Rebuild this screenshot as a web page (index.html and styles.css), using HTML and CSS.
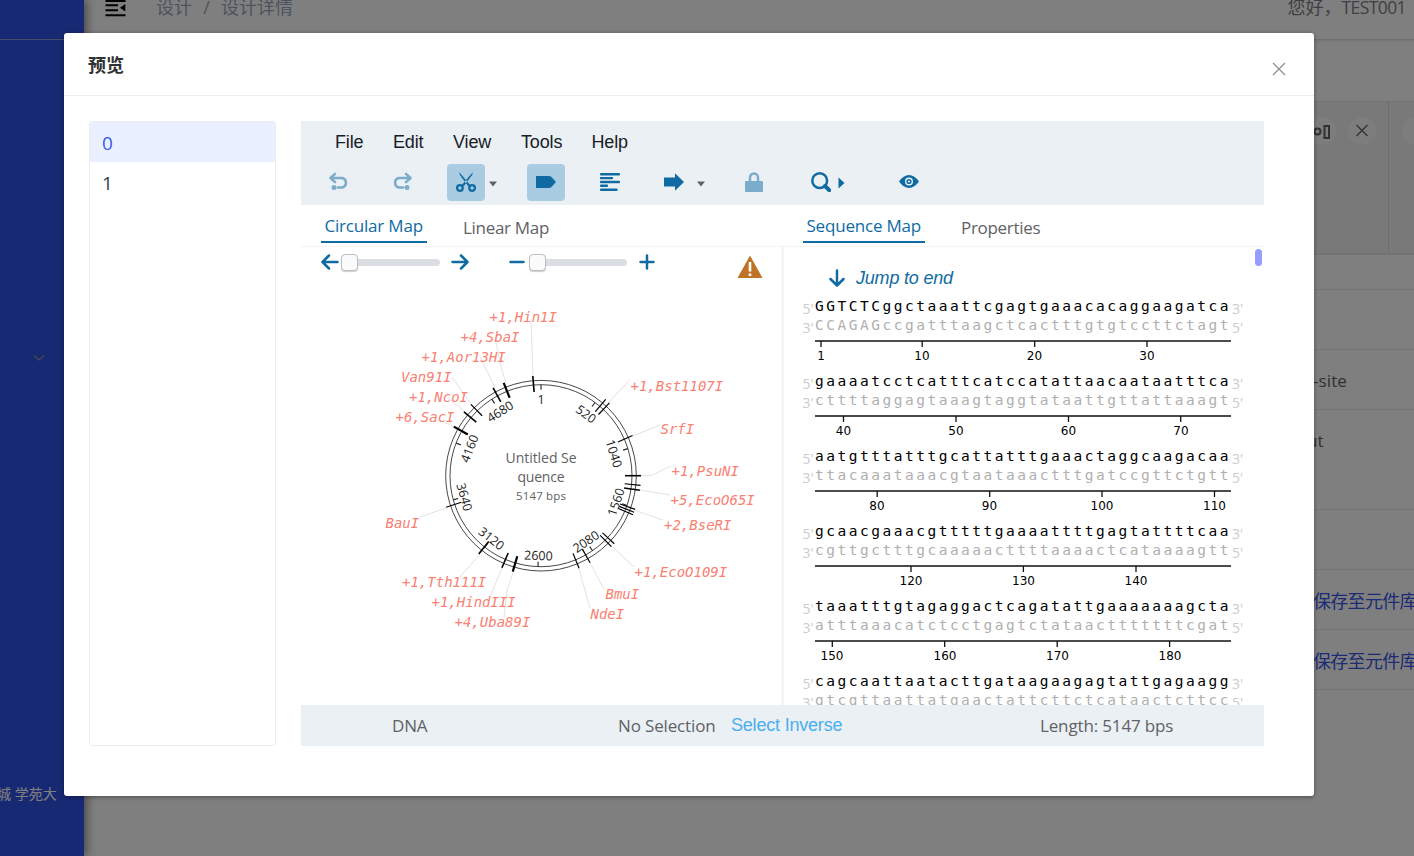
FILE: index.html
```html
<!DOCTYPE html>
<html lang="zh">
<head>
<meta charset="utf-8">
<title>预览</title>
<link rel="stylesheet" href="styles.css">
</head>
<body>
<div class="app">
  <aside class="sidebar">
    <div class="brand"></div>
    <div class="nav"><svg class="chev" width="12" height="8" viewBox="0 0 12 8"><path d="M1 1.5L6 6L11 1.5"/></svg></div>
    <div class="address">城 学苑大</div>
  </aside>
  <div class="main">
    <header class="topbar">
      <svg class="burger" width="22" height="18" viewBox="0 0 22 18"><path d="M1.500 2H21.500M1.500 6.300H14M1.500 11.300H14M1.500 16.300H21.500" /><path class="solid" d="M21.300 5V12.500L16 8.800Z"/></svg>
      <nav class="crumbs"><span>设计</span><i>/</i><span>设计详情</span></nav>
      <div class="user"><span>您好，</span><span class="uname">TEST001</span></div>
    </header>
    <section class="detail">
      <div class="strip">
        <div class="card">
          <span class="dot"><svg width="20" height="20" viewBox="0 0 20 20"><circle cx="5.500" cy="10.500" r="3"/><path d="M12.500 5H17V17H12.500Z M0 10.500H2"/></svg></span>
          <span class="dot"><svg width="14" height="14" viewBox="0 0 14 14"><path class="thin" d="M1.500 1L12.500 12M12.500 1L1.500 12"/></svg></span>
        </div>
        <div class="card next"><span class="dot"></span></div>
      </div>
      <div class="row head"></div>
      <div class="row"></div>
      <div class="row"><span class="site">-site</span></div>
      <div class="row tall"><span class="ut">ut</span></div>
      <div class="row"></div>
      <div class="row"><a>保存至元件库</a></div>
      <div class="row"><a>保存至元件库</a></div>
    </section>
  </div>
</div>

<div class="mask">
  <div class="modal">
    <div class="modal-head">
      <h1>预览</h1>
      <svg class="close" width="14" height="14" viewBox="0 0 14 14"><path d="M1 1L13 13M13 1L1 13"/></svg>
    </div>
    <div class="modal-body">
      <ul class="list"><li class="on">0</li><li>1</li></ul>
      <div class="editor">
        <div class="tools">
          <div class="menu"><span>File</span><span>Edit</span><span>View</span><span>Tools</span><span>Help</span></div>
          <div class="buttons">
            <div class="tool off"><button><svg class="line" width="22" height="20" viewBox="0 0 22 20"><path d="M7 1.800L2.500 6L7 10.200M3 6H14.500A5 5 0 0 1 14.500 15.500H10"/><circle class="fill" cx="6" cy="15.500" r="2.500"/></svg></button></div>
            <div class="tool off"><button><svg class="line" width="22" height="20" viewBox="0 0 22 20"><path d="M15 1.800L19.500 6L15 10.200M19 6H7.500A5 5 0 0 0 7.500 15.500H12"/><circle class="fill" cx="16" cy="15.500" r="2.500"/></svg></button></div>
            <div class="tool"><button class="on"><svg class="scissor" width="20" height="20" viewBox="0 0 20 20"><path class="fill" d="M3.300 .2L14.200 13L12.200 14.200L3.700 2.800ZM16.700 .2L5.800 13L7.800 14.200L16.300 2.800Z"/><circle cx="3.900" cy="16" r="2.800"/><circle cx="16.100" cy="16" r="2.800"/></svg></button><svg class="caret" width="10" height="6" viewBox="0 0 10 6"><path d="M1 .5H9L5 5.500Z"/></svg></div>
            <div class="tool"><button class="on"><svg width="20" height="12" viewBox="0 0 20 12"><path class="fill" d="M0 0H13Q14.500 0 15.500 1L20 6L15.500 11Q14.500 12 13 12H0Z"/></svg></button></div>
            <div class="tool"><button><svg class="bars" width="20" height="18" viewBox="0 0 20 18"><path d="M1 1.300H19M1 5.100H12M1 9H19M1 12.800H7M1 16.700H16.500"/></svg></button></div>
            <div class="tool"><button><svg width="20" height="18" viewBox="0 0 20 18"><path class="fill" d="M0 4.500H11V.3L20 9L11 17.700V13.500H0Z"/></svg></button><svg class="caret" width="10" height="6" viewBox="0 0 10 6"><path d="M1 .5H9L5 5.500Z"/></svg></div>
            <div class="tool off"><button><svg class="lock" width="18" height="20" viewBox="0 0 18 20"><path d="M5 9V5.500A4 4 0 0 1 13 5.500V9"/><rect class="fill" y="9" width="18" height="11" rx="1"/></svg></button></div>
            <div class="tool find"><button><svg class="mag" width="20" height="20" viewBox="0 0 20 20"><circle cx="8.700" cy="8.700" r="7.400"/><path d="M14 14L18.200 18.200"/></svg></button><svg class="next-arrow" width="7" height="12" viewBox="0 0 7 12"><path class="fill" d="M.5 .5L6.500 6L.5 11.500Z"/></svg></div>
            <div class="tool"><button><svg width="20" height="13" viewBox="0 0 20 13"><path class="fill" fill-rule="evenodd" d="M0 6.500Q4.500 0 10 0T20 6.500Q15.500 13 10 13T0 6.500ZM10 2.500A4 4 0 1 0 10 10.500A4 4 0 1 0 10 2.500Z"/><circle class="fill" cx="10" cy="6.500" r="2.600"/><circle cx="10" cy="6.500" r="1" fill="#fff"/></svg></button></div>
          </div>
        </div>
        <div class="tabs">
          <div class="pair"><span class="tab on t1">Circular Map</span><span class="tab t2">Linear Map</span></div>
          <div class="pair second"><span class="tab on t3">Sequence Map</span><span class="tab t4">Properties</span></div>
        </div>
        <div class="panes">
          <div class="pane">
            <div class="controls">
              <svg class="line" width="18" height="16" viewBox="0 0 18 16"><path d="M8 1.500L1.500 8L8 14.500M2 8H16.500"/></svg>
              <div class="slider"><b></b></div>
              <svg class="line right" width="18" height="16" viewBox="0 0 18 16"><path d="M10 1.500L16.500 8L10 14.500M16 8H1.500"/></svg>
              <svg class="line minus" width="16" height="16" viewBox="0 0 16 16"><path d="M1.500 8H14.500"/></svg>
              <div class="slider two"><b></b></div>
              <svg class="line" width="16" height="16" viewBox="0 0 16 16"><path d="M1.500 8H14.500M8 1.500V14.500"/></svg>
              <svg class="warn" width="26" height="24" viewBox="0 0 26 24"><path d="M13 .5L25.500 23H.5Z" fill="#bf7326"/><path d="M11.700 7H14.300V16.500H11.700ZM11.700 18.500H14.300V21H11.700Z" fill="#fff"/></svg>
            </div>
            <svg class="plasmid" width="480" height="417" viewBox="301 288 480 417">
              <path class="leader" d="M533 376L531 320M506 383L501 367L495 337M495 388L490 377L480 357M473 407L452 377M465 412L448 398M454 427L440 420M608 403L629 381M633 436L660 425M641 475.700H651L671 466M640 490L670 495M634 510L663 520M613 547L634 567M590 563L604 589M579 569L590 608M513 573L507 590L504 617M502 568L490 597M480 554L460 577M446 508L420 517"/>
              <g transform="translate(541 475.700)">
                <circle class="ring" r="95.300"/><circle class="ring" r="91"/>
                <g class="tick">
                  <path d="M0-91V-86"/><path transform="rotate(36.4)" d="M0-91V-86"/><path transform="rotate(72.7)" d="M0-91V-86"/><path transform="rotate(109.1)" d="M0-91V-86"/><path transform="rotate(145.5)" d="M0-91V-86"/><path transform="rotate(181.9)" d="M0-91V-86"/><path transform="rotate(218.2)" d="M0-91V-86"/><path transform="rotate(254.6)" d="M0-91V-86"/><path transform="rotate(291)" d="M0-91V-86"/><path transform="rotate(327.3)" d="M0-91V-86"/>
                </g>
                <g class="cut">
                  <path class="b" transform="rotate(-4.7)" d="M0-100V-84"/><path class="bb" transform="rotate(-21.9)" d="M0-100V-84"/><path class="b" transform="rotate(-28.6)" d="M0-100V-84"/><path transform="rotate(-44.5)" d="M0-100V-84"/><path class="b" transform="rotate(-50.4)" d="M0-100V-84"/><path class="bb" transform="rotate(-60.6)" d="M0-100V-84"/><path transform="rotate(-108.4)" d="M0-100V-84"/><path class="b" transform="rotate(218.5)" d="M0-100V-84"/><path class="b" transform="rotate(203)" d="M0-100V-84"/><path class="bb" transform="rotate(196.4)" d="M0-100V-84"/><path transform="rotate(40.3)" d="M0-100V-84"/><path transform="rotate(43.2)" d="M0-100V-84"/><path transform="rotate(66.3)" d="M0-100V-84"/><path class="b" transform="rotate(90)" d="M0-100V-84"/><path transform="rotate(95.500)" d="M0-100V-84"/><path class="b" transform="rotate(98.4)" d="M0-100V-84"/><path transform="rotate(109.7)" d="M0-100V-84"/><path transform="rotate(111.4)" d="M0-100V-84"/><path transform="rotate(113)" d="M0-100V-84"/><path transform="rotate(132.9)" d="M0-100V-84"/><path transform="rotate(135.2)" d="M0-100V-84"/><path transform="rotate(150.6)" d="M0-100V-84"/><path transform="rotate(157.6)" d="M0-100V-84"/>
                </g>
              </g>
              <g class="pos">
                <text x="541" y="404">1</text>
                <text transform="translate(586 414) rotate(36.4)" y="4.500">520</text>
                <text transform="translate(614 453.500) rotate(72.7)" y="4.500">1040</text>
                <text transform="translate(616 502) rotate(-70.9)" y="4.500">1560</text>
                <text transform="translate(586 541.500) rotate(-34.500)" y="4.500">2080</text>
                <text transform="translate(538.500 555.500) rotate(1.900)" y="4.500">2600</text>
                <text transform="translate(491.500 538.500) rotate(38.200)" y="4.500">3120</text>
                <text transform="translate(464.500 497) rotate(74.600)" y="4.500">3640</text>
                <text transform="translate(469.500 448.500) rotate(-69)" y="4.500">4160</text>
                <text transform="translate(500 411.500) rotate(-32.700)" y="4.500">4680</text>
              </g>
              <g class="enzyme">
                <text x="489.500" y="321.700">+1,Hin1I</text><text x="460.500" y="341.700">+4,SbaI</text><text x="421.500" y="361.700">+1,Aor13HI</text><text x="401" y="381.700">Van91I</text><text x="409" y="401.700">+1,NcoI</text><text x="395.500" y="421.700">+6,SacI</text>
                <text x="630.500" y="390.700">+1,Bst1107I</text><text x="660.500" y="433.700">SrfI</text><text x="671.500" y="475.700">+1,PsuNI</text><text x="670.500" y="504.700">+5,EcoO65I</text><text x="664" y="529.700">+2,BseRI</text><text x="634.500" y="576.700">+1,EcoO109I</text><text x="605.500" y="598.700">BmuI</text><text x="590.500" y="618.700">NdeI</text>
                <text x="385.500" y="527.700">BauI</text><text x="402" y="586.700">+1,Tth111I</text><text x="431.500" y="606.700">+1,HindIII</text><text x="454.500" y="626.700">+4,Uba89I</text>
              </g>
              <g class="caption"><text x="541" y="463" textLength="71">Untitled Se</text><text x="541" y="482" textLength="47">quence</text><text class="small" x="541" y="500" textLength="50">5147 bps</text></g>
            </svg>
          </div>
          <div class="split"></div>
          <div class="pane seqpane">
            <div class="jump"><svg class="line" width="16" height="18" viewBox="0 0 16 18"><path d="M1.500 10L8 16.500L14.500 10M8 16V1.500"/></svg><em>Jump to end</em></div>
            <svg class="seq" width="470" height="410" viewBox="784 295 470 410">
              <g><text class="s" x="815" y="311">GGTCTCggctaaattcgagtgaaacacaggaagatca</text><text class="c" x="815" y="330">CCAGAGccgatttaagctcactttgtgtccttctagt</text>
                <path d="M815 341H1231M821 341V347M922.200 341V347M1034.700 341V347M1147 341V347"/>
                <g class="n"><text x="821" y="360">1</text><text x="922" y="360">10</text><text x="1034.500" y="360">20</text><text x="1147" y="360">30</text></g>
                <g class="e"><text x="802.500" y="314">5'</text><text x="802.500" y="333">3'</text><text x="1232" y="314">3'</text><text x="1232" y="333">5'</text></g></g>
              <g transform="translate(0 75)"><text class="s" x="815" y="311">gaaaatcctcatttcatccatattaacaataatttca</text><text class="c" x="815" y="330">cttttaggagtaaagtaggtataattgttattaaagt</text>
                <path d="M815 341H1231M843.500 341V347M956 341V347M1068.500 341V347M1180.700 341V347"/>
                <g class="n"><text x="843.500" y="360">40</text><text x="956" y="360">50</text><text x="1068.500" y="360">60</text><text x="1181" y="360">70</text></g>
                <g class="e"><text x="802.500" y="314">5'</text><text x="802.500" y="333">3'</text><text x="1232" y="314">3'</text><text x="1232" y="333">5'</text></g></g>
              <g transform="translate(0 150)"><text class="s" x="815" y="311">aatgtttatttgcattatttgaaactaggcaagacaa</text><text class="c" x="815" y="330">ttacaaataaacgtaataaactttgatccgttctgtt</text>
                <path d="M815 341H1231M877.200 341V347M989.700 341V347M1102 341V347M1214.500 341V347"/>
                <g class="n"><text x="877" y="360">80</text><text x="989.500" y="360">90</text><text x="1102" y="360">100</text><text x="1214.500" y="360">110</text></g>
                <g class="e"><text x="802.500" y="314">5'</text><text x="802.500" y="333">3'</text><text x="1232" y="314">3'</text><text x="1232" y="333">5'</text></g></g>
              <g transform="translate(0 225)"><text class="s" x="815" y="311">gcaacgaaacgtttttgaaaattttgagtattttcaa</text><text class="c" x="815" y="330">cgttgctttgcaaaaacttttaaaactcataaaagtt</text>
                <path d="M815 341H1231M911 341V347M1023.400 341V347M1136 341V347"/>
                <g class="n"><text x="911" y="360">120</text><text x="1023.500" y="360">130</text><text x="1136" y="360">140</text></g>
                <g class="e"><text x="802.500" y="314">5'</text><text x="802.500" y="333">3'</text><text x="1232" y="314">3'</text><text x="1232" y="333">5'</text></g></g>
              <g transform="translate(0 300)"><text class="s" x="815" y="311">taaatttgtagaggactcagatattgaaaaaaagcta</text><text class="c" x="815" y="330">atttaaacatctcctgagtctataactttttttcgat</text>
                <path d="M815 341H1231M832.300 341V347M944.700 341V347M1057.200 341V347M1169.600 341V347"/>
                <g class="n"><text x="832" y="360">150</text><text x="945" y="360">160</text><text x="1057.500" y="360">170</text><text x="1170" y="360">180</text></g>
                <g class="e"><text x="802.500" y="314">5'</text><text x="802.500" y="333">3'</text><text x="1232" y="314">3'</text><text x="1232" y="333">5'</text></g></g>
              <g transform="translate(0 375)"><text class="s" x="815" y="311">cagcaattaatacttgataagaagagtattgagaagg</text><text class="c" x="815" y="330">gtcgttaattatgaactattcttctcataactcttcc</text>
                <g class="e"><text x="802.500" y="314">5'</text><text x="802.500" y="333">3'</text><text x="1232" y="314">3'</text><text x="1232" y="333">5'</text></g></g>
            </svg>
            <div class="thumb"></div>
          </div>
        </div>
        <div class="status"><span class="dna">DNA</span><span class="sel">No Selection</span><a>Select Inverse</a><span class="len">Length: 5147 bps</span></div>
      </div>
    </div>
  </div>
</div>
</body>
</html>
```

FILE: styles.css
```css
* { box-sizing: border-box; }
body { margin: 0; height: 856px; overflow: hidden; font-family: "Open Sans", "Noto Sans CJK SC", sans-serif; font-size: 17px; color: #606266; background: #fff; }
svg { display: block; flex: none; }

/* page behind the dialog */
.app { display: flex; height: 856px; }
.sidebar { width: 84px; flex: none; background: #3052e6; box-shadow: 2px 0 10px rgba(0,0,0,.5); color: #fff; display: flex; flex-direction: column; z-index: 1; overflow: hidden; }
.brand { height: 40px; border-bottom: 1px solid #8f9bd0; }
.nav { height: 743px; padding: 314px 0 0 33px; }
.chev path { fill: none; stroke: #909399; stroke-width: 1.3; }
.address { font-size: 14px; line-height: 22px; white-space: nowrap; margin-left: -3px; }
.main { flex: 1; min-width: 0; }
.topbar { height: 40px; display: flex; align-items: flex-start; border-bottom: 1px solid #d8dce5; box-shadow: 0 1px 3px rgba(0,0,0,.12); padding: 0 8px 0 20px; }
.burger { margin: -1px 30px 0 0; }
.burger path { fill: none; stroke: #000; stroke-width: 2; }
.burger .solid { fill: #000; stroke: none; }
.crumbs { display: flex; color: #97a8be; font-size: 18px; line-height: 26px; margin-top: -6px; }
.crumbs i { width: 29px; text-align: center; font-style: normal; }
.user { display: flex; margin: -6px 0 0 auto; font-size: 18px; line-height: 26px; color: #7f8088; }
.uname { font-size: 17.5px; letter-spacing: -.6px; }
.detail { padding-top: 61px; }
.strip { height: 154px; display: flex; background: #f2f2f2; border-top: 1px solid #e4e4e4; border-bottom: 2px solid #e6e6e6; overflow: hidden; }
.card { width: 1305px; flex: none; display: flex; justify-content: flex-end; gap: 12px; padding: 15px 12px 0 0; border-right: 1px solid #dadada; }
.next { justify-content: flex-start; padding-left: 13px; }
.dot { width: 28px; height: 28px; flex: none; border-radius: 50%; background: #fafafa; display: flex; align-items: center; justify-content: center; }
.dot path, .dot circle { fill: none; stroke: #606266; stroke-width: 2; }
.dot .thin { stroke-width: 1.3; }
.row { height: 60px; border-bottom: 1px solid #e4e6ea; display: flex; padding: 18px 0 0 1229px; white-space: nowrap; line-height: 26px; }
.row.head { height: 35px; }
.row.tall { height: 100px; }
.row a { font-size: 18px; color: #3a55e8; letter-spacing: -.7px; }
.site { letter-spacing: .1px; }
.ut { margin-left: -6px; }

/* dialog */
.mask { position: absolute; inset: 0; z-index: 2; background: rgba(0,0,0,.5); padding: 33px 0 0 64px; }
.modal { width: 1250px; height: 763px; background: #fff; border-radius: 3px; box-shadow: 0 1px 4px rgba(0,0,0,.4); }
.modal-head { height: 63px; border-bottom: 1px solid #ebecee; display: flex; justify-content: space-between; padding: 0 28.5px 0 24px; }
.modal-head h1 { margin: 19px 0 0; font-size: 18px; line-height: 26px; color: #303133; font-weight: 700; }
.close { margin-top: 28.5px; }
.close path { stroke: #909399; stroke-width: 1.4; }
.modal-body { display: flex; gap: 25px; padding: 25px; }
.list { width: 187px; height: 625px; margin: 0; padding: 0; list-style: none; border: 1px solid #ebeef0; border-radius: 3px; }
.list li { height: 40px; line-height: 42px; padding-left: 12px; font-size: 19px; color: #34404e; }
.list .on { background: #eaf0ff; color: #3a5be8; }
.editor { width: 963px; height: 625px; display: flex; flex-direction: column; }
.tools { height: 84px; flex: none; background: #ebf0f4; }
.menu { height: 43px; padding-left: 34px; display: grid; grid-template-columns: 58px 60px 68px 70.5px auto; font: 18px/42px "Liberation Sans", Arial, sans-serif; color: #182026; letter-spacing: -.15px; }
.buttons { display: grid; grid-template-columns: 63px 64px 80px 64px 64px 80px 67px 88px auto; padding-left: 19px; }
.tool { display: flex; align-items: center; color: #106ba3; }
.tool.off { opacity: .5; }
button { width: 38px; height: 37px; border: 0; padding: 0 0 2px; border-radius: 4px; background: none; color: inherit; display: flex; align-items: center; justify-content: center; }
button.on { background: #aacce2; }
.fill { fill: #106ba3; stroke: none; }
.caret { margin: 3px 0 0 3px; fill: #5f6367; }
.next-arrow { margin-left: -2px; }
.line path, .scissor circle, .bars path, .lock path, .mag { fill: none; stroke: #106ba3; stroke-width: 2.5; stroke-linecap: round; stroke-linejoin: round; }
.scissor circle { stroke-width: 2.3; }
.bars path { stroke-width: 2.4; }
.mag path { stroke-width: 4; }
.tabs { height: 42px; flex: none; display: flex; border-bottom: 1px solid #f2f4f5; }
.pair { width: 483px; display: flex; gap: 32px; padding-left: 20px; }
.tab { white-space: nowrap; line-height: 24px; padding: 11px 4px 0; height: 38px; }
.tab.on { padding: 9px 3.5px 0; color: #106ba3; border-bottom: 2px solid #106ba3; }
.second { padding-left: 20.5px; }
.t1 { width: 106px; } .t3 { width: 122px; }
.tab { letter-spacing: -.3px; }
.t1, .t3 { letter-spacing: -.2px; }
.panes { height: 458px; flex: none; display: flex; }
.pane { width: 480px; overflow: hidden; }
.split { width: 3px; background: #f3f6f8; }
.controls { height: 41px; display: flex; align-items: flex-start; padding: 7px 19px 0 20px; }
.slider { width: 99px; height: 7px; margin: 5px 12px 0 2px; border-radius: 4px; background: #dbdfe3; }
.slider b { display: block; width: 17px; height: 17px; margin-top: -5px; border-radius: 4px; border: 1px solid #bcc0c4; background: #fbfbfc; box-shadow: 0 1px 1px rgba(0,0,0,.2); }
.right { margin-left: -1px; }
.minus { margin-left: 40px; }
.slider.two { margin-left: 4px; width: 98px; }
.warn { margin: 1px -1px 0 auto; }
.ring { fill: none; stroke: #333; stroke-width: .9; }
.leader { fill: none; stroke: #e2e2e2; }
.tick { stroke: #222; stroke-width: 1.1; }
.cut { stroke: #000; stroke-width: 1.2; }
.b { stroke-width: 1.6; }
.bb { stroke-width: 2.2; }
.pos { font-size: 12.5px; fill: #222; text-anchor: middle; }
.enzyme { font: italic 14px "DejaVu Sans Mono", monospace; fill: #fa8072; }
.caption { font-size: 14px; fill: #606266; text-anchor: middle; }
.small { font-size: 11.5px; }
.seqpane { position: relative; }
.jump { height: 48px; display: flex; gap: 11px; padding: 22px 0 0 45px; font: 18px/20px "Liberation Sans", Arial, sans-serif; color: #106ba3; }
.jump em { margin-top: -1px; letter-spacing: -.2px; }
.seq .s, .seq .c { font: 14.5px "DejaVu Sans Mono", monospace; letter-spacing: 2.51px; fill: #000; }
.seq .c { fill: #b0b0b0; }
.seq path { fill: none; stroke: #111; stroke-width: 1.3; }
.n { font: 12px "DejaVu Sans", sans-serif; text-anchor: middle; fill: #000; }
.e { font-size: 14px; fill: #ccc; }
.thumb { position: absolute; right: 2px; top: 2px; width: 7px; height: 17px; border-radius: 4px; background: #969dff; }
.status { height: 41px; background: #ebf0f4; display: flex; white-space: nowrap; line-height: 41px; padding-left: 91px; letter-spacing: -.15px; }
.dna { width: 226px; }
.sel { width: 113px; }
.status a { width: 309px; font-family: "Liberation Sans", Arial, sans-serif; font-size: 18px; color: #48aff0; letter-spacing: -.2px; }
```
